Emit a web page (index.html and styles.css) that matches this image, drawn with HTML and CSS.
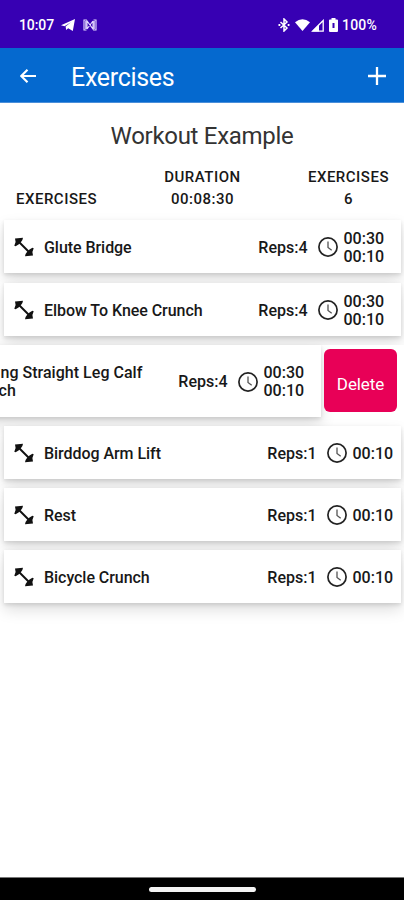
FILE: index.html
```
<!DOCTYPE html>
<html lang="en">
<head>
<meta charset="utf-8">
<meta name="viewport" content="width=device-width, initial-scale=1">
<title>Exercises</title>
<link rel="stylesheet" href="styles.css">
</head>
<body>
<svg class="defs" aria-hidden="true">
  <symbol id="dumbbell" viewBox="0 0 20 20"><path d="M4 4 16 16" stroke="#111" stroke-width="1.900"/><path d="M1 1.500 9 .8 8.400 3 7 5 4.500 7.500 1.600 9.200.3 8.800 1.600 5zM19 18.500 11 19.200 11.600 17 13 15 15.500 12.500 18.400 10.800 19.700 11.200 18.400 15z" fill="#111"/></symbol>
  <symbol id="clock" viewBox="0 0 20 20"><circle cx="10" cy="10" r="9.100" fill="none" stroke="#222" stroke-width="1.700"/><path d="M10 4.500v6l3.700 2.800" fill="none" stroke="#555" stroke-width="1.300"/></symbol>
</svg>
<div class="screen">
  <div class="status">
    <span class="time">10:07</span>
    <svg class="plane" viewBox="0 0 14 12"><path d="M0 6.200 14 0 11.800 12 7.200 9.200 5.200 11 4.600 7.500 10 3.200 3.500 7.200z" fill="#fff"/></svg>
    <svg class="nfc" viewBox="0 0 14 12"><path d="M3.500 1H1v10h2.500M10.500 1H13v10h-2.500M4 10V2l6 8V2M4 10l6-8M2.800 2v8M11.200 2v8" fill="none" stroke="#e6dcff" stroke-width="1.100"/></svg>
    <span class="grow"></span>
    <svg class="bt" viewBox="0 0 12 14"><path d="M2.500 4 9 10 6 13V1l3 3-6.500 6" fill="none" stroke="#fff" stroke-width="1.500"/><path d="M.5 6h1.800v2H.5zM9.700 6h1.800v2H9.700z" fill="#fff"/></svg>
    <svg class="wifi" viewBox="0 0 15 12"><path d="M0 3.200Q7.500-2.800 15 3.200L7.500 12z" fill="#fff"/></svg>
    <svg class="signal" viewBox="0 0 13 13"><path d="M1.500 12.200 12.200 1.500v10.700z" fill="none" stroke="#fff" stroke-width="1.300"/><path d="M1 12.500 8 5.500v7z" fill="#fff"/></svg>
    <svg class="battery" viewBox="0 0 9 14"><path d="M2.500 0h4v1.500H8q1 0 1 1V13q0 1-1 1H1q-1 0-1-1V2.500q0-1 1-1h1.500z" fill="#fff"/><path d="M3.500 5h2v5h-2z" fill="#3700b3"/></svg>
    <span class="percent">100%</span>
  </div>
  <header class="bar">
    <svg class="back" viewBox="0 0 16 16"><path d="M16 8H1.500M7.500 1.700 1.200 8 7.500 14.300" fill="none" stroke="#fff" stroke-width="2.200"/></svg>
    <h1>Exercises</h1>
    <svg class="plus" viewBox="0 0 18 18"><path d="M9 0v18M0 9h18" stroke="#fff" stroke-width="2.300"/></svg>
  </header>
  <h2>Workout Example</h2>
  <div class="summary">
    <div class="col first">EXERCISES</div>
    <div class="col mid">DURATION<br>00:08:30</div>
    <div class="col last">EXERCISES<br>6</div>
  </div>
  <main class="list">
    <div class="row"><div class="card"><svg class="db"><use href="#dumbbell"/></svg><span class="name">Glute Bridge</span><span class="reps">Reps:4</span><svg class="ck"><use href="#clock"/></svg><span class="times two">00:30<br>00:10</span></div></div>
    <div class="row"><div class="card"><svg class="db"><use href="#dumbbell"/></svg><span class="name">Elbow To Knee Crunch</span><span class="reps">Reps:4</span><svg class="ck"><use href="#clock"/></svg><span class="times two">00:30<br>00:10</span></div></div>
    <div class="row swiped"><div class="card"><svg class="db"><use href="#dumbbell"/></svg><span class="name">Seating Straight Leg Calf<br>Stretch</span><span class="reps">Reps:4</span><svg class="ck"><use href="#clock"/></svg><span class="times two">00:30<br>00:10</span></div><button class="delete">Delete</button></div>
    <div class="row"><div class="card"><svg class="db"><use href="#dumbbell"/></svg><span class="name">Birddog Arm Lift</span><span class="reps">Reps:1</span><svg class="ck"><use href="#clock"/></svg><span class="times">00:10</span></div></div>
    <div class="row"><div class="card"><svg class="db"><use href="#dumbbell"/></svg><span class="name">Rest</span><span class="reps">Reps:1</span><svg class="ck"><use href="#clock"/></svg><span class="times">00:10</span></div></div>
    <div class="row"><div class="card"><svg class="db"><use href="#dumbbell"/></svg><span class="name">Bicycle Crunch</span><span class="reps">Reps:1</span><svg class="ck"><use href="#clock"/></svg><span class="times">00:10</span></div></div>
  </main>
  <footer class="nav"><div class="handle"></div></footer>
</div>
</body>
</html>
```
FILE: styles.css
```
* { box-sizing: border-box; }
body { margin: 0; background: #fff; color: #181818; font-family: Roboto, "Liberation Sans", sans-serif; }
svg { display: block; flex: none; }
.defs { width: 0; height: 0; position: absolute; }
.screen { width: 404px; height: 900px; display: flex; flex-direction: column; overflow: hidden; }
.status { flex: none; height: 48px; background: #3700b3; color: #fff; display: flex; align-items: center; padding: 2px 27px 0 19px; font-size: 14px; font-weight: 500; }
.time { width: 42px; letter-spacing: -0.1px; }
.plane { width: 14px; height: 12px; }
.nfc { width: 14px; height: 12px; margin-left: 8px; }
.grow { flex: 1; }
.bt { width: 12px; height: 14px; }
.wifi { width: 15px; height: 12px; margin-left: 5px; }
.signal { width: 13px; height: 13px; margin-left: 1px; }
.battery { width: 9px; height: 14px; margin-left: 5px; }
.percent { width: 35px; margin-left: 4px; letter-spacing: 0.2px; }
.bar { flex: none; height: 55px; background: #0569cf; color: #fff; display: flex; align-items: center; padding: 2px 18px 0 20px; border-bottom: 1px solid #4a8fda; }
.back { width: 16px; height: 16px; }
.bar h1 { flex: 1; margin: 3px 0 0 35px; font-size: 25px; line-height: 30px; font-weight: 400; letter-spacing: -0.3px; }
.plus { width: 18px; height: 18px; }
h2 { flex: none; margin: 18px 0 0; text-align: center; font-size: 24px; line-height: 30px; font-weight: 400; letter-spacing: -0.3px; color: #333; }
.summary { flex: none; display: flex; align-items: flex-end; justify-content: space-between; margin: 15px 15px 0 16px; font-size: 15px; line-height: 22px; font-weight: 500; letter-spacing: 0.5px; text-align: center; }
.list { flex: none; display: flex; flex-direction: column; gap: 9px; padding-top: 10px; }
.row { display: flex; align-items: center; padding: 0 4px; }
.row:first-child { margin-bottom: 1px; }
.card { flex: none; width: 396.500px; height: 53px; display: flex; align-items: center; background: #fff; padding: 2px 8px 0 10px; font-size: 16px; line-height: 18px; font-weight: 500; box-shadow: 0 2px 4px rgba(0,0,0,.12), 0 7px 14px rgba(0,0,0,.13); }
.db { width: 20px; height: 20px; margin-top: -2px; }
.name { flex: 1; margin-left: 10px; letter-spacing: -0.05px; white-space: nowrap; }
.ck { width: 20px; height: 20px; margin: -1px 6px 0 10px; }
.times { width: 40px; white-space: nowrap; }
.times.two { margin-right: 9px; }
.swiped { background: #fff; }
.swiped .card { height: 72px; margin-left: -80px; }
.swiped .name { letter-spacing: 0.03px; }
.delete { flex: none; width: 73px; height: 63px; margin: -1px 0 0 3.500px; padding: 6px 0 0; border: 0; border-radius: 6px; background: #e80057; color: #fff; font: 400 17px Roboto, sans-serif; letter-spacing: -0.1px; }
.nav { flex: none; height: 23px; margin-top: auto; background: #000; border-top: 1px solid #777; display: flex; align-items: center; justify-content: center; }
.handle { width: 107px; height: 5px; border-radius: 3px; background: #f4f4f4; }
```
